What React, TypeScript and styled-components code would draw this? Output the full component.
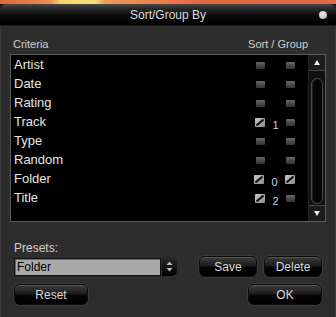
import React from 'react';
import styled, { createGlobalStyle } from 'styled-components';

const GlobalStyle = createGlobalStyle`
  html, body {
    margin: 0;
    padding: 0;
    background: #1a1a1a;
    font-family: "Liberation Sans", Arial, sans-serif;
  }
`;

const Wallpaper = styled.div`
  height: 4px;
  background: linear-gradient(
    90deg,
    #e0673e 0px,
    #ec8a52 50px,
    #f6d46a 60px,
    #f8e07a 95px,
    #ef9a58 105px,
    #e56a40 200px,
    #e26a44 336px
  );
`;

const Window = styled.div`
  width: 336px;
  height: 313px;
  border-radius: 7px 7px 0 0;
  background: #2d2d2d;
  display: flex;
  flex-direction: column;
  overflow: hidden;
  box-shadow: inset 1px 0 0 #3a3a3a, inset -1px 0 0 #3a3a3a;
`;

const TitleBar = styled.div`
  position: relative;
  height: 21px;
  flex: none;
  display: flex;
  align-items: center;
  justify-content: center;
  background: linear-gradient(180deg, #4a4a4a 0%, #2a2a2a 20%, #0c0c0c 55%, #000 100%);
  border-bottom: 1px solid #1a1a1a;
  color: #dcdcdc;
  font-size: 12px;
`;

const CloseDot = styled.span`
  position: absolute;
  right: 9px;
  top: 7px;
  width: 8px;
  height: 8px;
  border-radius: 50%;
  background: radial-gradient(circle at 40% 35%, #f0f0f0, #a8a8a8);
`;

const Body = styled.div`
  flex: 1;
  display: flex;
  flex-direction: column;
  padding: 11px 10px 0;
`;

const Header = styled.div`
  display: flex;
  justify-content: space-between;
  height: 14px;
  line-height: 14px;
  font-size: 11px;
  color: #cfcfcf;
  padding: 0 18px 0 3px;
`;

const ListBox = styled.div`
  margin-top: 3px;
  height: 166px;
  border: 1px solid #5c5c5c;
  background: #000;
  display: flex;
`;

const Rows = styled.div`
  flex: 1;
  display: flex;
  flex-direction: column;
`;

const Row = styled.div`
  height: 19px;
  display: flex;
  align-items: center;
  padding: 0 13px 0 3px;
`;

const Label = styled.span`
  flex: 1;
  font-size: 13px;
  color: #e6e6e6;
`;

const Box = styled.span<{ $checked?: boolean }>`
  width: ${(p) => (p.$checked ? 10 : 9)}px;
  height: ${(p) => (p.$checked ? 9 : 7)}px;
  border-radius: 1px;
  background: ${(p) =>
    p.$checked
      ? 'linear-gradient(135deg, #c8c8c8, #8a8a8a)'
      : 'linear-gradient(180deg, #6a6a6a 0%, #4a4a4a 50%, #333 100%)'};
  display: flex;
  align-items: center;
  justify-content: center;
  margin-top: 1px;
`;

const Order = styled.span`
  width: 21px;
  text-align: center;
  font-size: 11px;
  color: #c9d2e6;
  padding-top: 6px;
`;

const ScrollBar = styled.div`
  width: 16px;
  background: #111;
  border-left: 1px solid #222;
  display: flex;
  flex-direction: column;
`;

const Arrow = styled.div<{ $down?: boolean }>`
  height: 15px;
  flex: none;
  display: flex;
  align-items: center;
  justify-content: center;
  background: #1c1c1c;
  border-${(p) => (p.$down ? 'top' : 'bottom')}: 1px solid #444;
`;

const Track = styled.div`
  flex: 1;
  display: flex;
  padding: 7px 2px 1px;
`;

const Thumb = styled.div`
  flex: 1;
  border: 1px solid #4a4a4a;
  border-radius: 6px;
  background: #050505;
  box-shadow: inset 1px 0 0 #222;
`;

const Footer = styled.div`
  display: grid;
  grid-template-columns: 163px 1fr;
  grid-template-rows: 21px 21px;
  row-gap: 7px;
  padding: 0 4px;
`;

const PresetsLabel = styled.div`
  margin-top: 19px;
  padding-left: 4px;
  height: 14px;
  line-height: 14px;
  font-size: 12px;
  color: #d0d0d0;
  margin-bottom: 1px;
`;

const SelectGroup = styled.div`
  display: flex;
  align-items: center;
`;

const SelectField = styled.div`
  width: 145px;
  height: 16px;
  line-height: 16px;
  background: #a9a9a9;
  border: 1px solid #111;
  box-shadow: inset 1px 1px 0 #666;
  color: #000;
  font-size: 12px;
  padding-left: 2px;
`;

const Spinner = styled.div`
  width: 15px;
  height: 19px;
  margin-left: 1px;
  border-radius: 0 5px 5px 0;
  background: linear-gradient(180deg, #2a2a2a, #000);
  display: flex;
  align-items: center;
  justify-content: center;
`;

const ButtonPair = styled.div`
  display: flex;
  justify-content: flex-end;
  gap: 7px;
`;

const Button = styled.button<{ $w: number }>`
  width: ${(p) => p.$w}px;
  height: 21px;
  padding: 0;
  border: 1px solid #0a0a0a;
  border-radius: 6px;
  background: linear-gradient(180deg, #3c3c3c 0%, #1e1e1e 45%, #050505 55%, #000 100%);
  box-shadow: inset 0 1px 0 #555, 0 0 0 1px #3a3a3a;
  color: #d8d8d8;
  font-family: "Liberation Sans", Arial, sans-serif;
  font-size: 12px;
`;

const RightCell = styled.div`
  display: flex;
  justify-content: flex-end;
`;

const Slash = () => (
  <svg width="8" height="7" viewBox="0 0 8 7">
    <path d="M0.5 6.5 L7.5 0.5" stroke="#111" strokeWidth="2" />
  </svg>
);

const Tri = ({ down }: { down?: boolean }) => (
  <svg width="6" height="5" viewBox="0 0 6 5">
    <path d={down ? 'M0 0 H6 L3 5 Z' : 'M0 5 H6 L3 0 Z'} fill="#eee" />
  </svg>
);

interface ICriterion {
  name: string;
  sort?: number;
  group?: boolean;
}

const criteria: ICriterion[] = [
  { name: 'Artist' },
  { name: 'Date' },
  { name: 'Rating' },
  { name: 'Track', sort: 1 },
  { name: 'Type' },
  { name: 'Random' },
  { name: 'Folder', sort: 0, group: true },
  { name: 'Title', sort: 2 },
];

export default () => (
  <>
    <GlobalStyle />
    <Wallpaper />
    <Window>
      <TitleBar>
        Sort/Group By
        <CloseDot />
      </TitleBar>
      <Body>
        <Header>
          <span>Criteria</span>
          <span>Sort / Group</span>
        </Header>
        <ListBox>
          <Rows>
            {criteria.map((c) => (
              <Row key={c.name}>
                <Label>{c.name}</Label>
                <Box $checked={c.sort !== undefined}>{c.sort !== undefined && <Slash />}</Box>
                <Order>{c.sort !== undefined ? c.sort : ''}</Order>
                <Box $checked={c.group}>{c.group && <Slash />}</Box>
              </Row>
            ))}
          </Rows>
          <ScrollBar>
            <Arrow>
              <Tri />
            </Arrow>
            <Track>
              <Thumb />
            </Track>
            <Arrow $down>
              <Tri down />
            </Arrow>
          </ScrollBar>
        </ListBox>
        <PresetsLabel>Presets:</PresetsLabel>
        <Footer>
          <SelectGroup>
            <SelectField>Folder</SelectField>
            <Spinner>
              <svg width="7" height="11" viewBox="0 0 7 11">
                <path d="M0.5 4 H6.5 L3.5 0.5 Z M0.5 7 H6.5 L3.5 10.5 Z" fill="#bbb" />
              </svg>
            </Spinner>
          </SelectGroup>
          <ButtonPair>
            <Button $w={58}>Save</Button>
            <Button $w={58}>Delete</Button>
          </ButtonPair>
          <div>
            <Button $w={74}>Reset</Button>
          </div>
          <RightCell>
            <Button $w={74}>OK</Button>
          </RightCell>
        </Footer>
      </Body>
    </Window>
  </>
);
